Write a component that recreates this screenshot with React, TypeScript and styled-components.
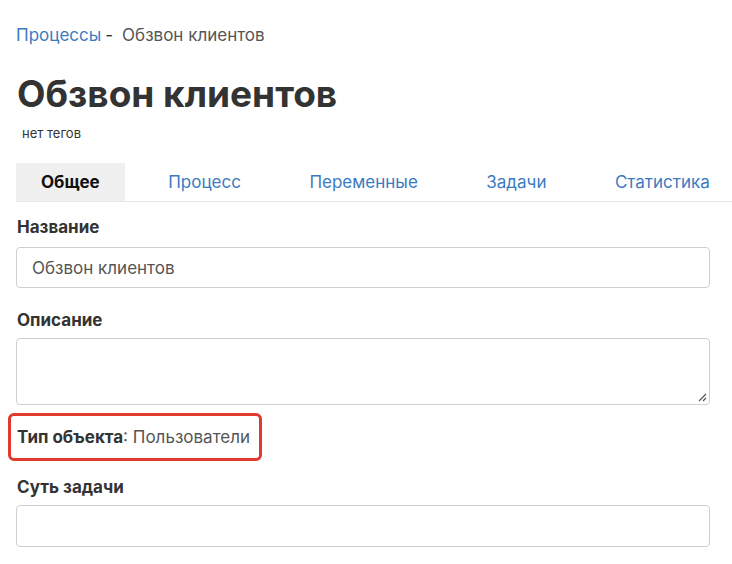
import React from "react";
import styled, { createGlobalStyle } from "styled-components";

const Global = createGlobalStyle`
  html, body { margin: 0; padding: 0; background: #fff; }
  body { font-family: Inter, "Noto Sans", sans-serif; color: #333; overflow: hidden; }
  * { box-sizing: border-box; }
`;

const Page = styled.div`
  width: 732px;
  height: 564px;
  padding: 24px 0 0 16px;
  overflow: hidden;
`;

const Breadcrumbs = styled.div`
  font-size: 17px;
  line-height: 22px;
  color: #555;
  display: flex;
  align-items: baseline;
`;

const Crumb = styled.a`
  color: #3b7bbf;
  text-decoration: none;
`;

const Sep = styled.span`
  color: #333;
  margin: 0 9px 0 4px;
`;

const Title = styled.h1`
  margin: 26px 0 0 1px;
  font-size: 37px;
  line-height: 44px;
  font-weight: 700;
  color: #333;
`;

const Tags = styled.div`
  margin: 8px 0 0 6px;
  font-size: 13px;
  line-height: 18px;
  color: #333;
`;

const TabBar = styled.div`
  margin-top: 21px;
  display: flex;
  gap: 18.5px;
  border-bottom: 1px solid #e6e6e6;
  white-space: nowrap;
`;

const Tab = styled.div<{ $active?: boolean }>`
  height: 38px;
  padding: 0 25px;
  display: flex;
  align-items: center;
  font-size: 17px;
  font-weight: ${(p) => (p.$active ? 700 : 400)};
  color: ${(p) => (p.$active ? "#111" : "#3b7bbf")};
  background: ${(p) => (p.$active ? "#f0f0f0" : "transparent")};
`;

const Form = styled.div`
  width: 694px;
  padding-top: 14px;
  display: flex;
  flex-direction: column;
`;

const Label = styled.div<{ $top?: number }>`
  margin-top: ${(p) => p.$top ?? 0}px;
  font-size: 17px;
  line-height: 22px;
  font-weight: 700;
  color: #333;
  padding-left: 1px;
`;

const Input = styled.div<{ $h?: number; $gap?: number }>`
  margin-top: ${(p) => p.$gap ?? 9}px;
  height: ${(p) => p.$h ?? 41}px;
  border: 1px solid #cfcfcf;
  border-radius: 4px;
  padding: 0 15px;
  display: flex;
  align-items: center;
  font-size: 17px;
  color: #555;
  position: relative;
`;

const Grip = styled.svg`
  position: absolute;
  right: 2px;
  bottom: 2px;
`;

const Highlight = styled.div`
  margin: 8px 0 0 -8px;
  width: 254px;
  height: 48px;
  border: 3px solid #e0392e;
  border-radius: 6px;
  display: flex;
  align-items: center;
  padding-left: 6px;
  font-size: 17px;
  color: #555;
  white-space: nowrap;
`;

const Strong = styled.span`
  font-weight: 700;
  color: #333;
`;

export default function App() {
  return (
    <>
      <Global />
      <Page>
        <Breadcrumbs>
          <Crumb>Процессы</Crumb>
          <Sep>-</Sep>
          <span>Обзвон клиентов</span>
        </Breadcrumbs>
        <Title>Обзвон клиентов</Title>
        <Tags>нет тегов</Tags>
        <TabBar>
          <Tab $active>Общее</Tab>
          <Tab>Процесс</Tab>
          <Tab>Переменные</Tab>
          <Tab>Задачи</Tab>
          <Tab>Статистика</Tab>
        </TabBar>
        <Form>
          <Label>Название</Label>
          <Input>Обзвон клиентов</Input>
          <Label $top={21}>Описание</Label>
          <Input $h={67} $gap={7}>
            <Grip width="10" height="10" viewBox="0 0 10 10">
              <path d="M9 2 L2 9 M9 6 L6 9" stroke="#555" strokeWidth="1.2" />
            </Grip>
          </Input>
          <Highlight>
            <Strong>Тип объекта</Strong>: Пользователи
          </Highlight>
          <Label $top={15}>Суть задачи</Label>
          <Input $h={42} $gap={7}></Input>
        </Form>
      </Page>
    </>
  );
}
